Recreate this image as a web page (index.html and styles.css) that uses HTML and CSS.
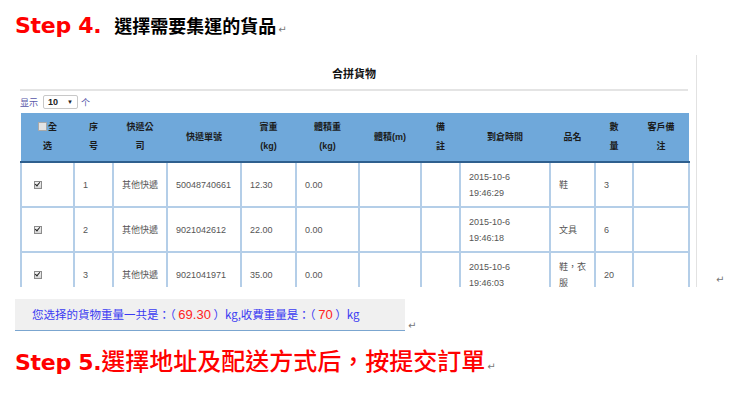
FILE: index.html
```html
<!DOCTYPE html>
<html lang="zh-Hant">
<head>
  <meta charset="UTF-8" />
  <meta name="viewport" content="width=device-width, initial-scale=1.0"/>
  <title>集運步驟</title>
  <link rel="stylesheet" href="styles.css">
</head>
<body>

  <h2 class="step step4"><span class="step-no">Step 4.</span><span class="step-txt">選擇需要集運的貨品</span><span class="ret">↵</span></h2>

  <div class="shot-row">
    <div class="shot">
      <div class="shot-title">合拼貨物</div>
      <div class="length">显示 <span class="sel">10 <i>▼</i></span> 个</div>

      <table class="goods">
        <colgroup>
          <col style="width:53px"><col style="width:39px"><col style="width:54px"><col style="width:74px">
          <col style="width:55px"><col style="width:63px"><col style="width:62px"><col style="width:39px">
          <col style="width:90px"><col style="width:45px"><col style="width:38px"><col style="width:56px">
        </colgroup>
        <thead>
          <tr>
            <th><span class="cb"></span>全<br>选</th>
            <th>序<br>号</th>
            <th>快遞公<br>司</th>
            <th>快遞單號</th>
            <th>實重<br>(kg)</th>
            <th>體積重<br>(kg)</th>
            <th>體積(m)</th>
            <th>備<br>註</th>
            <th>到倉時間</th>
            <th>品名</th>
            <th>數<br>量</th>
            <th>客戶備<br>注</th>
          </tr>
        </thead>
        <tbody>
          <tr>
            <td class="chk"><span class="cb on"></span></td>
            <td>1</td><td>其他快遞</td><td>50048740661</td><td>12.30</td><td>0.00</td>
            <td></td><td></td><td>2015-10-6 19:46:29</td><td>鞋</td><td>3</td><td></td>
          </tr>
          <tr>
            <td class="chk"><span class="cb on"></span></td>
            <td>2</td><td>其他快遞</td><td>9021042612</td><td>22.00</td><td>0.00</td>
            <td></td><td></td><td>2015-10-6 19:46:18</td><td>文具</td><td>6</td><td></td>
          </tr>
          <tr>
            <td class="chk"><span class="cb on"></span></td>
            <td>3</td><td>其他快遞</td><td>9021041971</td><td>35.00</td><td>0.00</td>
            <td></td><td></td><td>2015-10-6 19:46:03</td><td>鞋，衣服</td><td>20</td><td></td>
          </tr>
        </tbody>
      </table>
    </div>
    <span class="ret">↵</span>
  </div>

  <div class="sum-row">
    <div class="sum">您选择的貨物重量一共是：（ <span class="num">69.30</span> ）kg,收費重量是：（ <span class="num">70</span> ）kg</div>
    <span class="ret">↵</span>
  </div>

  <h2 class="step step5"><span class="step-no">Step 5.</span><span class="step-txt">選擇地址及配送方式后，按提交訂單</span><span class="ret">↵</span></h2>

</body>
</html>
```

FILE: styles.css
```css
body {
  margin: 0;
  padding: 0 15px;
  font-family: "Liberation Sans", "Noto Sans CJK TC", sans-serif;
  background: #fff;
}

/* step headings */
.step {
  margin: 0;
  font-weight: normal;
  line-height: 30px;
  white-space: nowrap;
}

.step4 {
  padding-top: 10px;
  height: 45px;
}

.step5 {
  margin-top: 14px;
}

.step-no {
  font-family: "DejaVu Sans", sans-serif;
  font-weight: bold;
  font-size: 22px;
  letter-spacing: -0.3px;
  color: #f00;
}

.step4 .step-txt {
  margin-left: 13px;
  font-family: "Noto Sans CJK TC", sans-serif;
  font-weight: bold;
  font-size: 18px;
  color: #000;
}

.step5 .step-txt {
  font-family: "Noto Sans CJK TC", sans-serif;
  font-weight: 500;
  font-size: 24px;
  color: #f00;
}

.ret {
  font-family: "DejaVu Sans", sans-serif;
  font-size: 10px;
  color: #777;
  margin-left: 2px;
}

/* captured panel */
.shot-row {
  display: flex;
  align-items: flex-end;
  margin-left: 5px;
}

.shot-row .ret {
  margin-left: 19px;
  margin-bottom: 2px;
}

.shot {
  width: 668px;
  height: 232px;
  padding-right: 8px;
  border-right: 1px solid #e2e2e2;
  overflow: hidden;
}

.shot-title {
  padding: 10px 0 8px;
  line-height: 16px;
  text-align: center;
  font-family: "Noto Sans CJK TC", sans-serif;
  font-size: 11px;
  font-weight: bold;
  color: #111;
  border-bottom: 2px solid #e4e4e4;
}

.length {
  display: flex;
  align-items: center;
  height: 22px;
  font-size: 9px;
  color: #5656a8;
}

.sel {
  display: inline-flex;
  align-items: center;
  justify-content: space-between;
  box-sizing: border-box;
  width: 35px;
  height: 14px;
  margin: 0 3px 0 5px;
  padding: 0 4px;
  border: 1px solid #c8c8c8;
  border-radius: 2px;
  color: #222;
  font-weight: bold;
  font-size: 9px;
}

.sel i {
  font-style: normal;
  font-size: 6px;
}

.goods {
  table-layout: fixed;
  width: 668px;
  border-collapse: collapse;
  font-size: 9px;
  color: #555;
}

.goods th {
  height: 38px;
  padding: 5px 2px;
  line-height: 19px;
  background-color: #6fa8da;
  color: #1b1b1b;
  font-weight: bold;
  text-align: center;
  border-bottom: 2px solid #2e5f8e;
}

.goods td {
  height: 43px;
  padding: 0 8px;
  line-height: 16px;
  border: 2px solid #b4cee8;
  vertical-align: middle;
}

.goods td.chk {
  padding-left: 12px;
}

/* fake checkboxes */
.cb {
  display: inline-block;
  width: 7px;
  height: 7px;
  margin-right: 1px;
  border: 1px solid #a9a9a9;
  background: #e3e3e3;
  vertical-align: -1px;
  position: relative;
}

.cb.on {
  width: 6px;
  height: 6px;
  background: linear-gradient(#f4f4f4, #d6d6d6);
  border-color: #8c8c8c;
}

.cb.on::after {
  content: "";
  position: absolute;
  left: 1px;
  top: -1px;
  width: 2px;
  height: 4px;
  border: solid #222;
  border-width: 0 1.5px 1.5px 0;
  transform: rotate(40deg);
}

/* weight summary */
.sum-row {
  display: flex;
  align-items: flex-end;
  margin-top: 12px;
}

.sum {
  width: 373px;
  height: 31px;
  padding-left: 17px;
  line-height: 31px;
  background: #f0f0f0;
  border-bottom: 1px solid #7ba6d0;
  font-family: "Noto Sans CJK TC", sans-serif;
  font-size: 11.5px;
  color: #3b3bf2;
  white-space: nowrap;
}

.sum .num {
  font-family: "Liberation Sans", sans-serif;
  font-size: 13px;
  color: #f22;
}

.sum-row .ret {
  margin-left: 3px;
}
```
